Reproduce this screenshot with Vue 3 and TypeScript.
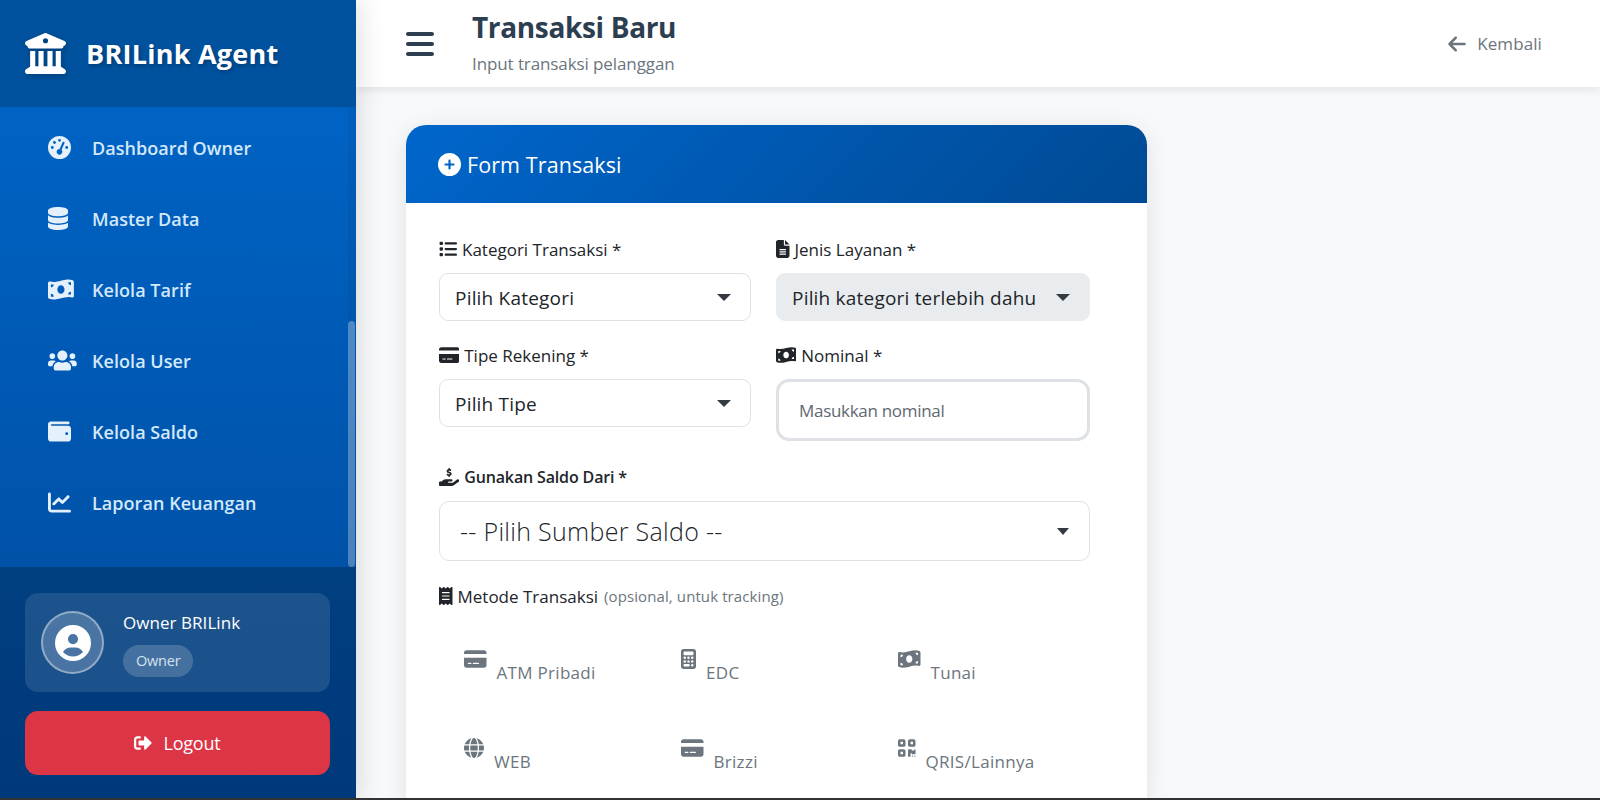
<script setup lang="ts">
const icons: Record<string, { w: number; d: string }> = {
  bank: { w: 512, d: 'M243.4 2.6l-224 96c-14 6-21.8 21-18.7 35.8S16.8 160 32 160v8c0 13.3 10.7 24 24 24H456c13.3 0 24-10.7 24-24v-8c15.2 0 28.3-10.7 31.3-25.6s-4.8-29.9-18.7-35.8l-224-96c-8-3.4-17.2-3.4-25.2 0zM128 224H64V420.3c-.6 .3-1.2 .7-1.8 1.1l-48 32c-11.7 7.8-17 22.4-12.9 35.9S17.9 512 32 512H480c14.1 0 26.5-9.2 30.6-22.7s-1.1-28.1-12.9-35.9l-48-32c-.6-.4-1.2-.7-1.8-1.1V224H384V416H344V224H280V416H232V224H168V416H128V224zM256 64a32 32 0 1 1 0 64 32 32 0 1 1 0-64z' },
  gauge: { w: 512, d: 'M0 256a256 256 0 1 1 512 0A256 256 0 1 1 0 256zM288 96a32 32 0 1 0 -64 0 32 32 0 1 0 64 0zM256 416c35.3 0 64-28.7 64-64c0-17.4-6.9-33.1-18.1-44.6L366 161.7c5.3-12.1-.2-26.3-12.3-31.6s-26.3 .2-31.6 12.3L257.9 288c-.6 0-1.3 0-1.9 0c-35.3 0-64 28.7-64 64s28.7 64 64 64zM176 144a32 32 0 1 0 -64 0 32 32 0 1 0 64 0zM96 288a32 32 0 1 0 0-64 32 32 0 1 0 0 64zm352-32a32 32 0 1 0 -64 0 32 32 0 1 0 64 0z' },
  database: { w: 448, d: 'M448 80v48c0 44.2-100.3 80-224 80S0 172.2 0 128V80C0 35.8 100.3 0 224 0S448 35.8 448 80zM393.2 214.7c20.8-7.4 39.9-16.9 54.8-28.6V288c0 44.2-100.3 80-224 80S0 332.2 0 288V186.1c14.9 11.8 34 21.2 54.8 28.6C99.7 230.7 159.5 240 224 240s124.3-9.3 169.2-25.3zM0 346.1c14.9 11.8 34 21.2 54.8 28.6C99.7 390.7 159.5 400 224 400s124.3-9.3 169.2-25.3c20.8-7.4 39.9-16.9 54.8-28.6V432c0 44.2-100.3 80-224 80S0 476.2 0 432V346.1z' },
  money: { w: 576, d: 'M0 112.5V422.3c0 18 10.1 35 27 41.3c87 32.5 174 10.3 261-11.9c79.8-20.3 159.6-40.7 239.3-18.1c23.6 6.7 48.7-9.9 48.7-34.6V89.7c0-18-10.1-35-27-41.3C462 15.9 375 38.1 288 60.3C208.2 80.6 128.4 100.9 48.7 78.4C25.1 71.7 0 88.3 0 112.5zM288 352c-44.2 0-80-43-80-96s35.8-96 80-96s80 43 80 96s-35.8 96-80 96zM64 352c35.3 0 64 28.7 64 64H64V352zm64-208c0 35.3-28.7 64-64 64V144h64zM512 304v64H448c0-35.3 28.7-64 64-64zM448 96h64v64c-35.3 0-64-28.7-64-64z' },
  users: { w: 640, d: 'M96 224c35.3 0 64-28.7 64-64s-28.7-64-64-64-64 28.7-64 64 28.7 64 64 64zm448 0c35.3 0 64-28.7 64-64s-28.7-64-64-64-64 28.7-64 64 28.7 64 64 64zm32 32h-64c-17.6 0-33.5 7.1-45.1 18.6 40.3 22.1 68.9 62 75.1 109.4h66c17.7 0 32-14.3 32-32v-32c0-35.3-28.7-64-64-64zm-256 0c61.9 0 112-50.1 112-112S381.9 32 320 32 208 82.1 208 144s50.1 112 112 112zm76.8 32h-8.3c-20.8 10-43.9 16-68.5 16s-47.6-6-68.5-16h-8.3C179.6 288 128 339.6 128 403.2V432c0 26.5 21.5 48 48 48h288c26.5 0 48-21.5 48-48v-28.8c0-63.6-51.6-115.2-115.2-115.2zm-223.7-13.4C161.5 263.1 145.6 256 128 256H64c-35.3 0-64 28.7-64 64v32c0 17.7 14.3 32 32 32h65.9c6.3-47.4 34.9-87.3 75.2-109.4z' },
  wallet: { w: 512, d: 'M64 32C28.7 32 0 60.7 0 96V416c0 35.3 28.7 64 64 64H448c35.3 0 64-28.7 64-64V192c0-35.3-28.7-64-64-64H80c-8.8 0-16-7.2-16-16s7.2-16 16-16H448c17.7 0 32-14.3 32-32s-14.3-32-32-32H64zM416 272a32 32 0 1 1 0 64 32 32 0 1 1 0-64z' },
  chart: { w: 512, d: 'M64 64c0-17.7-14.3-32-32-32S0 46.3 0 64V400c0 44.2 35.8 80 80 80H480c17.7 0 32-14.3 32-32s-14.3-32-32-32H80c-8.8 0-16-7.2-16-16V64zm406.6 86.6c12.5-12.5 12.5-32.8 0-45.3s-32.8-12.5-45.3 0L320 210.7l-57.4-57.4c-12.5-12.5-32.8-12.5-45.3 0l-112 112c-12.5 12.5-12.5 32.8 0 45.3s32.8 12.5 45.3 0L240 221.3l57.4 57.4c12.5 12.5 32.8 12.5 45.3 0l128-128z' },
  user: { w: 512, d: 'M399 384.2C376.9 345.8 335.4 320 288 320H224c-47.4 0-88.9 25.8-111 64.2c35.2 39.2 86.2 63.8 143 63.8s107.8-24.7 143-63.8zM0 256a256 256 0 1 1 512 0A256 256 0 1 1 0 256zm256 16a72 72 0 1 0 0-144 72 72 0 1 0 0 144z' },
  logout: { w: 512, d: 'M497 273L329 441c-15 15-41 4.5-41-17v-96H152c-13.3 0-24-10.7-24-24v-96c0-13.3 10.7-24 24-24h136V88c0-21.4 25.9-32 41-17l168 168c9.3 9.4 9.3 24.6 0 34zM192 436v-40c0-6.6-5.4-12-12-12H96c-17.7 0-32-14.3-32-32V160c0-17.7 14.3-32 32-32h84c6.6 0 12-5.4 12-12V76c0-6.6-5.4-12-12-12H96c-53 0-96 43-96 96v192c0 53 43 96 96 96h84c6.6 0 12-5.4 12-12z' },
  bars: { w: 448, d: 'M0 96C0 78.3 14.3 64 32 64H416c17.7 0 32 14.3 32 32s-14.3 32-32 32H32C14.3 128 0 113.7 0 96zM0 256c0-17.7 14.3-32 32-32H416c17.7 0 32 14.3 32 32s-14.3 32-32 32H32c-17.7 0-32-14.3-32-32zM448 416c0 17.7-14.3 32-32 32H32c-17.7 0-32-14.3-32-32s14.3-32 32-32H416c17.7 0 32 14.3 32 32z' },
  back: { w: 448, d: 'M9.4 233.4c-12.5 12.5-12.5 32.8 0 45.3l160 160c12.5 12.5 32.8 12.5 45.3 0s12.5-32.8 0-45.3L109.2 288 416 288c17.7 0 32-14.3 32-32s-14.3-32-32-32l-306.7 0L214.6 118.6c12.5-12.5 12.5-32.8 0-45.3s-32.8-12.5-45.3 0l-160 160z' },
  plus: { w: 512, d: 'M256 512A256 256 0 1 0 256 0a256 256 0 1 0 0 512zM232 344V280H168c-13.3 0-24-10.7-24-24s10.7-24 24-24h64V168c0-13.3 10.7-24 24-24s24 10.7 24 24v64h64c13.3 0 24 10.7 24 24s-10.7 24-24 24H280v64c0 13.3-10.7 24-24 24s-24-10.7-24-24z' },
  list: { w: 512, d: 'M40 48C26.7 48 16 58.7 16 72v48c0 13.3 10.7 24 24 24H88c13.3 0 24-10.7 24-24V72c0-13.3-10.7-24-24-24H40zM192 64c-17.7 0-32 14.3-32 32s14.3 32 32 32H480c17.7 0 32-14.3 32-32s-14.3-32-32-32H192zm0 160c-17.7 0-32 14.3-32 32s14.3 32 32 32H480c17.7 0 32-14.3 32-32s-14.3-32-32-32H192zm0 160c-17.7 0-32 14.3-32 32s14.3 32 32 32H480c17.7 0 32-14.3 32-32s-14.3-32-32-32H192zM16 232v48c0 13.3 10.7 24 24 24H88c13.3 0 24-10.7 24-24V232c0-13.3-10.7-24-24-24H40c-13.3 0-24 10.7-24 24zM40 368c-13.3 0-24 10.7-24 24v48c0 13.3 10.7 24 24 24H88c13.3 0 24-10.7 24-24V392c0-13.3-10.7-24-24-24H40z' },
  file: { w: 384, d: 'M64 0C28.7 0 0 28.7 0 64V448c0 35.3 28.7 64 64 64H320c35.3 0 64-28.7 64-64V160H256c-17.7 0-32-14.3-32-32V0H64zM256 0V128H384L256 0zM112 256H272c8.8 0 16 7.2 16 16s-7.2 16-16 16H112c-8.8 0-16-7.2-16-16s7.2-16 16-16zm0 64H272c8.8 0 16 7.2 16 16s-7.2 16-16 16H112c-8.8 0-16-7.2-16-16s7.2-16 16-16zm0 64H272c8.8 0 16 7.2 16 16s-7.2 16-16 16H112c-8.8 0-16-7.2-16-16s7.2-16 16-16z' },
  card: { w: 576, d: 'M64 32C28.7 32 0 60.7 0 96v32H576V96c0-35.3-28.7-64-64-64H64zM576 224H0V416c0 35.3 28.7 64 64 64H512c35.3 0 64-28.7 64-64V224zM112 352h64c8.8 0 16 7.2 16 16s-7.2 16-16 16H112c-8.8 0-16-7.2-16-16s7.2-16 16-16zm112 16c0-8.8 7.2-16 16-16H368c8.8 0 16 7.2 16 16s-7.2 16-16 16H240c-8.8 0-16-7.2-16-16z' },
  hand: { w: 576, d: 'M312 24V34.5c6.4 1.2 12.6 2.7 18.2 4.2c12.8 3.4 20.4 16.6 17 29.4s-16.6 20.4-29.4 17c-10.9-2.9-21.1-4.9-30.2-5c-7.3-.1-14.7 1.7-19.4 4.4c-2.1 1.3-3.1 2.4-3.5 3c-.3 .5-.7 1.2-.7 2.8c0 .3 0 .5 0 .6c.2 .2 .9 1.2 3.3 2.6c5.8 3.5 14.4 6.2 27.4 10.1l.9 .3c11.1 3.3 25.9 7.8 37.9 15.3c13.7 8.6 26.1 22.9 26.4 44.9c.3 22.5-11.4 38.9-26.7 48.5c-6.7 4.1-13.9 7-21.3 8.8V232c0 13.3-10.7 24-24 24s-24-10.7-24-24V220.6c-9.5-2.3-18.2-5.3-25.6-7.8c-2.1-.7-4.1-1.4-6-2c-12.6-4.2-19.4-17.8-15.2-30.4s17.8-19.4 30.4-15.2c2.6 .9 5 1.7 7.3 2.5c13.6 4.6 23.4 7.9 33.9 8.3c8 .3 15.1-1.6 19.2-4.1c1.9-1.2 2.8-2.2 3.2-2.9c.4-.6 .9-1.8 .8-4.1l0-.2c0-1 0-2.1-4-4.6c-5.7-3.6-14.3-6.4-27.1-10.3l-1.9-.6c-10.8-3.2-25-7.5-36.4-14.4c-13.5-8.1-26.5-22-26.6-44.1c-.1-22.9 12.9-38.6 27.7-47.4c6.4-3.8 13.3-6.4 20.2-8.2V24c0-13.3 10.7-24 24-24s24 10.7 24 24zM568.2 336.3c13.1 17.8 9.3 42.8-8.5 55.9L433.1 485.5c-23.4 17.2-51.6 26.5-80.7 26.5H192 32c-17.7 0-32-14.3-32-32V416c0-17.7 14.3-32 32-32H68.8l44.9-36c22.7-18.2 50.9-28 80-28H272h16 64c17.7 0 32 14.3 32 32s-14.3 32-32 32H288 272c-8.8 0-16 7.2-16 16s7.2 16 16 16H392.6l119.7-88.2c17.8-13.1 42.8-9.3 55.9 8.5z' },
  receipt: { w: 384, d: 'M14 2.2C22.5-1.7 32.5-.3 39.6 5.8L80 40.4 120.4 5.8c9-7.7 22.3-7.7 31.2 0L192 40.4 232.4 5.8c9-7.7 22.2-7.7 31.2 0L304 40.4 344.4 5.8c7.1-6.1 17.1-7.5 25.6-3.6s14 12.4 14 21.8V488c0 9.4-5.5 17.9-14 21.8s-18.5 2.5-25.6-3.6L304 471.6l-40.4 34.6c-9 7.7-22.3 7.7-31.2 0L192 471.6l-40.4 34.6c-9 7.7-22.2 7.7-31.2 0L80 471.6 39.6 506.2c-7.1 6.1-17.1 7.5-25.6 3.6S0 497.4 0 488V24C0 14.6 5.5 6.1 14 2.2zM96 144c-8.8 0-16 7.2-16 16s7.2 16 16 16H288c8.8 0 16-7.2 16-16s-7.2-16-16-16H96zM80 352c0 8.8 7.2 16 16 16H288c8.8 0 16-7.2 16-16s-7.2-16-16-16H96c-8.8 0-16 7.2-16 16zM96 240c-8.8 0-16 7.2-16 16s7.2 16 16 16H288c8.8 0 16-7.2 16-16s-7.2-16-16-16H96z' },
  calc: { w: 384, d: 'M64 0C28.7 0 0 28.7 0 64V448c0 35.3 28.7 64 64 64H320c35.3 0 64-28.7 64-64V64c0-35.3-28.7-64-64-64H64zM96 64H288c17.7 0 32 14.3 32 32v32c0 17.7-14.3 32-32 32H96c-17.7 0-32-14.3-32-32V96c0-17.7 14.3-32 32-32zm32 160a32 32 0 1 1 -64 0 32 32 0 1 1 64 0zM96 352a32 32 0 1 1 0-64 32 32 0 1 1 0 64zM64 416c0-17.7 14.3-32 32-32h96c17.7 0 32 14.3 32 32s-14.3 32-32 32H96c-17.7 0-32-14.3-32-32zM192 256a32 32 0 1 1 0-64 32 32 0 1 1 0 64zm32 64a32 32 0 1 1 -64 0 32 32 0 1 1 64 0zm64-64a32 32 0 1 1 0-64 32 32 0 1 1 0 64zm32 64a32 32 0 1 1 -64 0 32 32 0 1 1 64 0zM288 448a32 32 0 1 1 0-64 32 32 0 1 1 0 64z' },
  globe: { w: 512, d: 'M352 256c0 22.2-1.2 43.6-3.3 64H163.3c-2.2-20.4-3.3-41.8-3.3-64s1.2-43.6 3.3-64H348.7c2.2 20.4 3.3 41.8 3.3 64zm28.8-64H503.9c5.3 20.5 8.1 41.9 8.1 64s-2.8 43.5-8.1 64H380.8c2.1-20.6 3.2-42 3.2-64s-1.1-43.4-3.2-64zm112.6-32H376.7c-10-63.9-29.8-117.4-55.3-151.6c78.3 20.7 142 77.5 171.9 151.6zm-149.1 0H167.7c6.1-36.4 15.5-68.6 27-94.7c10.5-23.6 22.2-40.7 33.5-51.5C239.4 3.2 248.7 0 256 0s16.6 3.2 27.8 13.8c11.3 10.8 23 27.9 33.5 51.5c11.6 26 20.9 58.2 27 94.7zm-209 0H18.6C48.6 85.9 112.2 29.1 190.6 8.4C165.1 42.6 145.3 96.1 135.3 160zM8.1 192H131.2c-2.1 20.6-3.2 42-3.2 64s1.1 43.4 3.2 64H8.1C2.8 299.5 0 278.1 0 256s2.8-43.5 8.1-64zM194.7 446.6c-11.6-26-20.9-58.2-27-94.6H344.3c-6.1 36.4-15.5 68.6-27 94.6c-10.5 23.6-22.2 40.7-33.5 51.5C272.6 508.8 263.3 512 256 512s-16.6-3.2-27.8-13.8c-11.3-10.8-23-27.9-33.5-51.5zM135.3 352c10 63.9 29.8 117.4 55.3 151.6C112.2 482.9 48.6 426.1 18.6 352H135.3zm358.1 0c-30 74.1-93.6 130.9-171.9 151.6c25.5-34.2 45.2-87.7 55.3-151.6H493.4z' },
  qr: { w: 448, d: 'M0 80C0 53.5 21.5 32 48 32h96c26.5 0 48 21.5 48 48v96c0 26.5-21.5 48-48 48H48c-26.5 0-48-21.5-48-48V80zM64 96v64h64V96H64zM0 336c0-26.5 21.5-48 48-48h96c26.5 0 48 21.5 48 48v96c0 26.5-21.5 48-48 48H48c-26.5 0-48-21.5-48-48V336zm64 16v64h64V352H64zM304 32h96c26.5 0 48 21.5 48 48v96c0 26.5-21.5 48-48 48H304c-26.5 0-48-21.5-48-48V80c0-26.5 21.5-48 48-48zm80 64H320v64h64V96zM256 304c0-8.8 7.2-16 16-16h64c8.8 0 16 7.2 16 16s7.2 16 16 16h32c8.8 0 16-7.2 16-16s7.2-16 16-16s16 7.2 16 16v96c0 8.8-7.2 16-16 16H368c-8.8 0-16-7.2-16-16s-7.2-16-16-16s-16 7.2-16 16v64c0 8.8-7.2 16-16 16H272c-8.8 0-16-7.2-16-16V304zM368 480a16 16 0 1 1 0-32 16 16 0 1 1 0 32zm64 0a16 16 0 1 1 0-32 16 16 0 1 1 0 32z' },
}

const nav = [
  { icon: 'gauge', label: 'Dashboard Owner' },
  { icon: 'database', label: 'Master Data' },
  { icon: 'money', label: 'Kelola Tarif' },
  { icon: 'users', label: 'Kelola User' },
  { icon: 'wallet', label: 'Kelola Saldo' },
  { icon: 'chart', label: 'Laporan Keuangan' },
]

const methods = [
  { icon: 'card', label: 'ATM Pribadi' },
  { icon: 'calc', label: 'EDC' },
  { icon: 'money', label: 'Tunai' },
  { icon: 'globe', label: 'WEB' },
  { icon: 'card', label: 'Brizzi' },
  { icon: 'qr', label: 'QRIS/Lainnya' },
]
</script>

<template>
  <div class="page">
    <aside class="sidebar">
      <div class="brand">
        <svg class="brand-icon" :viewBox="`0 0 ${icons.bank.w} 512`"><path :d="icons.bank.d" /></svg>
        <span class="brand-name">BRILink Agent</span>
      </div>
      <div class="nav-wrap">
        <nav class="nav">
          <a v-for="n in nav" :key="n.label" class="nav-item">
            <span class="nav-icon"><svg :viewBox="`0 0 ${icons[n.icon].w} 512`"><path :d="icons[n.icon].d" /></svg></span>
            <span>{{ n.label }}</span>
          </a>
        </nav>
        <div class="scrolltrack"><div class="scrollthumb"></div></div>
      </div>
      <div class="side-foot">
        <div class="profile">
          <div class="avatar">
            <svg viewBox="0 0 512 512"><path :d="icons.user.d" /></svg>
          </div>
          <div class="profile-text">
            <div class="profile-name">Owner BRILink</div>
            <span class="role">Owner</span>
          </div>
        </div>
        <button class="logout">
          <svg viewBox="0 0 512 512"><path :d="icons.logout.d" /></svg>
          <span>Logout</span>
        </button>
      </div>
    </aside>

    <div class="main">
      <header class="topbar">
        <svg class="burger" viewBox="0 0 448 512"><path :d="icons.bars.d" /></svg>
        <div class="titles">
          <h1>Transaksi Baru</h1>
          <p>Input transaksi pelanggan</p>
        </div>
        <a class="back">
          <svg viewBox="0 0 448 512"><path :d="icons.back.d" /></svg>
          <span>Kembali</span>
        </a>
      </header>

      <div class="content">
        <section class="card">
          <div class="card-head">
            <svg viewBox="0 0 512 512"><path :d="icons.plus.d" /></svg>
            <span>Form Transaksi</span>
          </div>
          <div class="card-body">
            <div class="form-grid">
              <div class="field">
                <label><svg class="li" viewBox="0 0 512 512"><path :d="icons.list.d" /></svg>Kategori Transaksi *</label>
                <div class="select"><span>Pilih Kategori</span><i class="caret"></i></div>
              </div>
              <div class="field">
                <label><svg class="li" viewBox="0 0 384 512"><path :d="icons.file.d" /></svg>Jenis Layanan *</label>
                <div class="select disabled"><span>Pilih kategori terlebih dahu</span><i class="caret"></i></div>
              </div>
              <div class="field">
                <label><svg class="li" viewBox="0 0 576 512"><path :d="icons.card.d" /></svg>Tipe Rekening *</label>
                <div class="select"><span>Pilih Tipe</span><i class="caret"></i></div>
              </div>
              <div class="field">
                <label><svg class="li" viewBox="0 0 576 512"><path :d="icons.money.d" /></svg>Nominal *</label>
                <div class="input">Masukkan nominal</div>
              </div>
            </div>

            <div class="saldo">
              <label class="strong"><svg class="li" viewBox="0 0 576 512"><path :d="icons.hand.d" /></svg>Gunakan Saldo Dari *</label>
              <div class="select large"><span>-- Pilih Sumber Saldo --</span><i class="caret small"></i></div>
            </div>

            <div class="metode">
              <label><svg class="li" viewBox="0 0 384 512"><path :d="icons.receipt.d" /></svg>Metode Transaksi <small>(opsional, untuk tracking)</small></label>
              <div class="method-grid">
                <div v-for="m in methods" :key="m.label + m.icon" class="method">
                  <svg :viewBox="`0 0 ${icons[m.icon].w} 512`"><path :d="icons[m.icon].d" /></svg>
                  <span>{{ m.label }}</span>
                </div>
              </div>
            </div>
          </div>
        </section>
      </div>
    </div>
    <div class="bottom-line"></div>
  </div>
</template>

<style>
html, body { margin: 0; height: 100%; overflow: hidden; }
</style>

<style scoped>
.page {
  position: relative;
  display: flex;
  height: 800px;
  overflow: hidden;
  font-family: "Open Sans", "Noto Sans", sans-serif;
  color: #212529;
  background: #f8f9fa;
}
svg { fill: currentColor; display: block; }

.sidebar {
  width: 356px;
  flex: none;
  display: flex;
  flex-direction: column;
  color: #fff;
  box-shadow: 4px 0 25px rgba(0, 0, 0, 0.12);
  z-index: 2;
  background: #0052a8;
}
.brand {
  height: 107px;
  flex: none;
  display: flex;
  align-items: center;
  padding-left: 25px;
  gap: 20px;
  background: #00529f;
  box-sizing: border-box;
}
.brand-icon { width: 41px; height: 41px; filter: drop-shadow(1px 2px 3px rgba(0,0,0,.25)); }
.brand-name { font-size: 27px; font-weight: 700; letter-spacing: 0.25px; text-shadow: 1px 2px 4px rgba(0,0,0,.3); }

.nav-wrap {
  flex: 1;
  display: flex;
  min-height: 0;
  background: linear-gradient(180deg, #0063c4 0%, #0052a8 100%);
}
.nav { flex: 1; padding-top: 5px; }
.scrolltrack { width: 8px; background: rgba(0,0,0,.05); }
.scrollthumb { margin-top: 214px; height: 246px; width: 7px; border-radius: 4px; background: rgba(255,255,255,.3); }
.nav-item {
  height: 71px;
  display: flex;
  align-items: center;
  padding-left: 48px;
  font-size: 18px;
  font-weight: 600;
  letter-spacing: 0.05px;
  color: #d4e8fb;
}
.nav-icon { width: 44px; flex: none; display: flex; }
.nav-icon svg { height: 23px; width: auto; color: #e4f0fc; }

.side-foot {
  flex: none;
  height: 233px;
  box-sizing: border-box;
  padding: 26px 26px 0 25px;
  background: linear-gradient(180deg, #003f80 0%, #00397a 100%);
}
.profile {
  height: 99px;
  box-sizing: border-box;
  border-radius: 13px;
  background: rgba(255,255,255,.11);
  display: flex;
  align-items: center;
  padding-left: 16px;
  gap: 19px;
}
.avatar {
  width: 63px;
  height: 63px;
  box-sizing: border-box;
  border-radius: 50%;
  border: 2px solid rgba(255,255,255,.4);
  background: rgba(255,255,255,.2);
  display: flex;
  align-items: center;
  justify-content: center;
}
.avatar svg { width: 36px; height: 36px; }
.profile-text { display: flex; flex-direction: column; align-items: flex-start; gap: 11px; margin-top: 2px; }
.profile-name { font-size: 17px; font-weight: 500; letter-spacing: 0.05px; line-height: 23px; }
.role {
  height: 32px;
  padding: 0 13px;
  display: flex;
  align-items: center;
  border-radius: 16px;
  font-size: 14.5px;
  color: #d6e2ee;
  background: rgba(255,255,255,.18);
  letter-spacing: -0.2px;
}
.logout {
  margin-top: 19px;
  width: 100%;
  height: 64px;
  border: 0;
  border-radius: 13px;
  background: #dc3545;
  color: #fff;
  display: flex;
  align-items: center;
  justify-content: center;
  gap: 11px;
  font: 500 18px "Open Sans", sans-serif;
  letter-spacing: -0.2px;
}
.logout svg { width: 18px; height: 18px; }

.main { flex: 1; min-width: 0; display: flex; flex-direction: column; }
.topbar {
  height: 87px;
  flex: none;
  box-sizing: border-box;
  display: flex;
  align-items: center;
  padding: 0 58px 0 50px;
  background: #fff;
  box-shadow: 0 2px 10px rgba(0,0,0,.1);
  z-index: 1;
}
.burger { width: 28px; height: 32px; color: #2c3e50; }
.titles { margin-left: 38px; }
h1 { margin: -2px 0 0; font-size: 28px; line-height: 32px; font-weight: 700; color: #2c3e50; letter-spacing: -0.35px; }
.titles p { margin: 10px 0 0; font-size: 17px; line-height: 22px; color: #6c757d; letter-spacing: -0.1px; }
.back { margin-left: auto; display: flex; align-items: center; gap: 11px; color: #6c757d; font-size: 17px; letter-spacing: 0.1px; }
.back svg { width: 18px; height: 20px; }

.content { flex: 1; min-height: 0; padding: 38px 50px 0; }
.card {
  width: 741px;
  border-radius: 20px 20px 0 0;
  background: #fff;
  box-shadow: 0 4px 24px rgba(0,0,0,.1);
}
.card-head {
  height: 78px;
  box-sizing: border-box;
  display: flex;
  align-items: center;
  gap: 6px;
  padding-left: 32px;
  border-radius: 20px 20px 0 0;
  color: #fff;
  font-size: 21.5px;
  letter-spacing: 0.1px;
  background: linear-gradient(135deg, #0066cc 0%, #004a94 100%);
}
.card-head svg { width: 23px; height: 23px; }
.card-body { padding: 34px 57px 0 33px; height: 600px; box-sizing: border-box; }

.form-grid { display: grid; grid-template-columns: 312px 314px; column-gap: 25px; }
label {
  display: flex;
  align-items: center;
  gap: 5px;
  height: 24px;
  font-size: 17px;
  color: #212529;
  letter-spacing: 0;
}
.li { height: 18px; width: auto; flex: none; }
.field { margin-bottom: 22px; }
.field label { margin-bottom: 12px; }
.select {
  height: 48px;
  box-sizing: border-box;
  border: 1px solid #dee2e6;
  border-radius: 9px;
  display: flex;
  align-items: center;
  justify-content: space-between;
  padding: 0 19px 0 15px;
  font-size: 19px;
  letter-spacing: 0.2px;
  background: #fff;
  white-space: nowrap;
}
.select > span { padding-top: 2px; }
.select.disabled { background: #e9ecef; border-color: #e9ecef; }
.caret { width: 0; height: 0; border: 7px solid transparent; border-top: 7px solid #343a40; border-bottom: 0; flex: none; }
.caret.small { border-width: 6px; border-top-width: 7px; border-bottom-width: 0; border-top-color: #343a40; }
.input {
  height: 62px;
  box-sizing: border-box;
  border: 3px solid #dee2e6;
  border-radius: 13px;
  display: flex;
  align-items: center;
  padding-left: 20px;
  font-size: 17px;
  letter-spacing: -0.3px;
  color: #5f6871;
}
.saldo { margin-top: 2px; }
.strong { font-weight: 600; font-size: 16px; letter-spacing: -0.15px; margin-bottom: 12px; }
.select.large { height: 60px; font-size: 25px; letter-spacing: 0.3px; padding: 0 20px; border-radius: 10px; font-weight: 300; }
.select.large > span { padding-top: 0; }
.metode { margin-top: 23px; }
small { font-size: 15px; color: #6c757d; font-weight: 500; letter-spacing: 0.1px; margin-left: 1px; }
.method-grid { display: grid; grid-template-columns: 217px 217px 1fr; margin-top: 41px; padding-left: 25px; }
.method { height: 89px; display: flex; color: #6c757d; font-size: 17px; letter-spacing: 0.3px; gap: 10px; }
.method svg { height: 20px; width: auto; flex: none; }
.method span { margin-top: 12px; line-height: 24px; }

.bottom-line { position: absolute; left: 0; right: 0; bottom: 0; height: 2px; background: #333; z-index: 5; }
</style>
